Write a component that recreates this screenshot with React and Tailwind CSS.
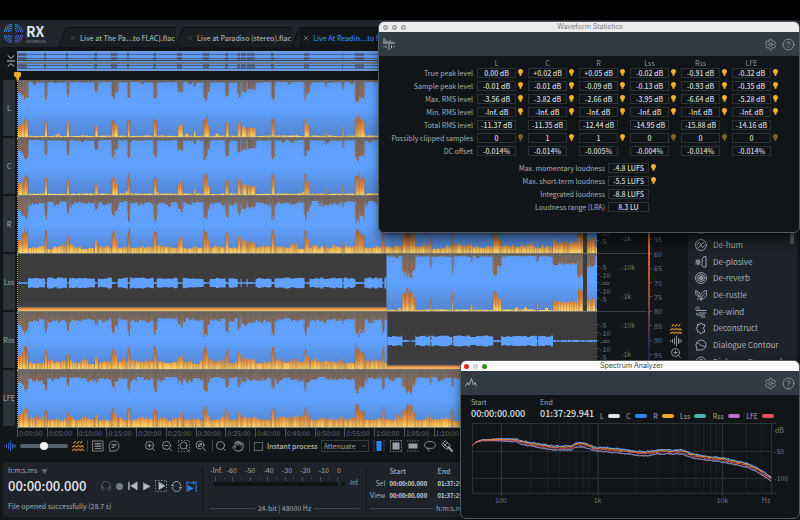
// src/App.jsx
import React, { useState } from 'react';
import { ZoomIn, ZoomOut, Search, Hand, Settings, CircleHelp, Headphones, ChevronDown, X } from 'lucide-react';

// ---------------------------------------------------------------- data

const LANE_W = 580;
const LANE_H = 58;

// Quiet passages of the recording: [start, width, depth]
const SPIKES = [
    [0, 3, 13], [3, 4, 17], [6, 4, 21], [27, 2, 20], [49, 2, 17], [77, 3, 12], [94, 3, 19], [97, 3, 13],
    [110, 2, 22], [136, 3, 21], [160, 3, 12], [163, 2, 15], [176, 2, 6], [186, 4, 22], [190, 2, 12],
    [208, 3, 18], [220, 3, 17], [224, 5, 12], [230, 8, 10], [254, 3, 21], [287, 2, 21], [289, 3, 14],
    [308, 1, 7], [325, 1, 11], [338, 4, 23], [342, 5, 19], [365, 2, 21], [385, 4, 20], [389, 6, 24],
    [395, 3, 17], [413, 1, 15], [435, 1, 20], [454, 1, 7], [476, 4, 23], [480, 4, 14], [520, 1, 9],
    [536, 4, 12], [540, 20, 10], [560, 6, 24], [570, 8, 13],
];

const LANES = [
    { name: 'L', floor: 1, noise: 1, gain: 1 },
    { name: 'C', floor: 1, noise: 1, gain: 1 },
    { name: 'R', floor: 4, noise: 6, gain: 1.2 },
    { name: 'Lss', floor: 1, noise: 1, gain: 1, quiet: [0, 369] },
    { name: 'Rss', floor: 5, noise: 6, gain: 1.1, quiet: [370, 580] },
    { name: 'LFE', floor: 6, noise: 6, gain: 1 },
];

const CHANNELS = ['L', 'C', 'R', 'Lss', 'Rss', 'LFE'];

const STATS = [
    { label: 'True peak level', values: ['0.00 dB', '+0.02 dB', '+0.05 dB', '-0.02 dB', '-0.91 dB', '-0.32 dB'], pins: [1, 1, 1, 1, 1, 1] },
    { label: 'Sample peak level', values: ['-0.01 dB', '-0.01 dB', '-0.09 dB', '-0.13 dB', '-0.93 dB', '-0.35 dB'], pins: [1, 1, 1, 1, 1, 1] },
    { label: 'Max. RMS level', values: ['-3.56 dB', '-3.82 dB', '-2.66 dB', '-3.95 dB', '-6.64 dB', '-5.28 dB'], pins: [1, 1, 1, 1, 1, 1] },
    { label: 'Min. RMS level', values: ['-Inf. dB', '-Inf. dB', '-Inf. dB', '-Inf. dB', '-Inf. dB', '-Inf. dB'], pins: [1, 1, 1, 1, 1, 1] },
    { label: 'Total RMS level', values: ['-11.37 dB', '-11.35 dB', '-12.44 dB', '-14.95 dB', '-15.88 dB', '-14.16 dB'], pins: null },
    { label: 'Possibly clipped samples', values: ['0', '1', '1', '0', '0', '0'], pins: [0, 1, 1, 0, 0, 0] },
    { label: 'DC offset', values: ['-0.014%', '-0.014%', '-0.005%', '-0.004%', '-0.014%', '-0.014%'], pins: null },
];

const LOUDNESS = [
    { label: 'Max. momentary loudness', value: '-4.8 LUFS', pin: true },
    { label: 'Max. short-term loudness', value: '-5.5 LUFS', pin: true },
    { label: 'Integrated loudness', value: '-8.8 LUFS', pin: false },
    { label: 'Loudness range (LRA)', value: '8.3 LU', pin: false },
];

const LEGEND = [
    { name: 'L', color: 'bg-[#e4e4e4]' },
    { name: 'C', color: 'bg-[#2f83f7]' },
    { name: 'R', color: 'bg-[#f5a623]' },
    { name: 'Lss', color: 'bg-[#3fb8a5]' },
    { name: 'Rss', color: 'bg-[#b573c6]' },
    { name: 'LFE', color: 'bg-[#ee5060]' },
];

const TIMES = Array.from({ length: 15 }, (_, i) => {
    const min = i * 5;
    return `${Math.floor(min / 60)}:${String(min % 60).padStart(2, '0')}:00`;
});

const rand = (n) => {
    const v = Math.sin(n * 12.9898) * 43758.5453;
    return v - Math.floor(v);
};

// ---------------------------------------------------------------- spectrogram

const depthAt = (x) => {
    let depth = 0;
    SPIKES.forEach(([start, width, d]) => {
        if (x >= start && x < start + width) depth = Math.max(depth, d);
    });
    return depth;
};

// How far the waveform stays away from the lane's edge in column x
const insetAt = (x, lane, seed) => {
    const swell = rand(Math.floor(x / 7) + seed);
    const floor = lane.floor + lane.noise * (0.3 * swell + 0.7 * rand(x * 3 + seed) * swell);
    const bump = rand(Math.floor(x / 3) * 5 + seed) > 0.95 ? 2 : 0;
    const spike = depthAt(x) * lane.gain * (0.75 + 0.25 * rand(x * 7 + seed));
    return Math.min(28, Math.max(floor + bump, spike));
};

const Spectrogram = ({ lane, index }) => {
    const loudFrom = lane.quiet && lane.quiet[0] === 0 ? lane.quiet[1] : 0;
    const loudTo = lane.quiet && lane.quiet[0] > 0 ? lane.quiet[0] : LANE_W;
    let wave = '';
    let edges = '';
    let streaks = '';
    for (let x = loudFrom; x < loudTo; x++) {
        if (x >= 566 && x < 570) continue;
        const top = insetAt(x, lane, index * 100 + 11);
        const bottom = insetAt(x, lane, index * 100 + 57);
        wave += `M${x} ${(top + 1).toFixed(1)}h1V${(57 - bottom).toFixed(1)}h-1z`;
        const near = depthAt(x - 1) || depthAt(x + 1);
        if (!depthAt(x) && near) edges += `M${x} 0h1V${(near * 0.8).toFixed(1)}h-1zM${x} 57h1V${(57 - near * 0.8).toFixed(1)}h-1z`;
        if (rand(x + index * 31) > 0.55) streaks += `M${x} 0h1V57h-1z`;
    }
    let band = '';
    if (lane.quiet) {
        for (let x = lane.quiet[0]; x < lane.quiet[1]; x++) {
            const gap = depthAt(x) > 8 || x > 536;
            const h = gap ? 0.5 + rand(x) * 0.6 : 4 + rand(Math.floor(x / 3)) * 1.5;
            band += `M${x} ${(29 - h).toFixed(1)}h1V${(29 + h).toFixed(1)}h-1z`;
        }
    }
    return (
        <svg viewBox={`0 0 ${LANE_W} ${LANE_H}`} preserveAspectRatio="none" className="block h-full w-full" aria-hidden="true">
            <defs>
                <linearGradient id={`spec${index}`} x1="0" y1="0" x2="0" y2="1">
                    <stop offset="0" stopColor="#696868" />
                    <stop offset="0.12" stopColor="#7c6c64" />
                    <stop offset="0.35" stopColor="#986b50" />
                    <stop offset="0.5" stopColor="#766c68" />
                    <stop offset="0.68" stopColor="#bb7443" />
                    <stop offset="0.85" stopColor="#e79345" />
                    <stop offset="0.94" stopColor="#fbc85b" />
                    <stop offset="1" stopColor="#fde07a" />
                </linearGradient>
                <linearGradient id={`wave${index}`} gradientUnits="userSpaceOnUse" x1="0" y1="0" x2="0" y2="58">
                    <stop offset="0" stopColor="#5b98f0" />
                    <stop offset="0.2" stopColor="#60a1ff" />
                    <stop offset="0.5" stopColor="#60a1ff" />
                    <stop offset="0.78" stopColor="#5890e2" />
                    <stop offset="1" stopColor="#5485d0" />
                </linearGradient>
                <linearGradient id={`floor${index}`} x1="0" y1="0" x2="0" y2="1">
                    <stop offset="0" stopColor="#3c3c3c" />
                    <stop offset="0.5" stopColor="#3f4656" />
                    <stop offset="0.6" stopColor="#a0683f" />
                    <stop offset="0.8" stopColor="#f0a050" />
                    <stop offset="1" stopColor="#f8bc62" />
                </linearGradient>
            </defs>
            <rect width={LANE_W} height={LANE_H} fill={`url(#spec${index})`} />
            <path d={streaks} fill="#7b4f3c" opacity="0.28" />
            <path d={wave} fill={`url(#wave${index})`} />
            <path d={edges} fill="#7a6b68" opacity="0.45" />
            {!lane.quiet && <rect x="566" width="4" height={LANE_H} fill="#3c3c3c" />}
            {lane.quiet && (
                <>
                    {loudFrom > 0 && <rect x="566" width="4" height={LANE_H} fill="#3c3c3c" />}
                    <rect x={lane.quiet[0]} width={lane.quiet[1] - lane.quiet[0]} height={LANE_H} fill="#3c3c3c" />
                    <rect x={lane.quiet[0]} y="48" width={lane.quiet[1] - lane.quiet[0]} height="9" fill={`url(#floor${index})`} />
                    <path d={band} fill="#60a1ff" />
                </>
            )}
            <rect y="57" width={LANE_W} height="1" fill="#777774" />
        </svg>
    );
};

const Overview = () => {
    const rows = [[3, 1, '#53698c'], [7, 1, '#4e5f7c'], [9, 1, '#3d4148'], [11, 2, '#70747c'], [14, 1, '#4b5870'], [17, 1, '#53698c']];
    return (
        <svg viewBox="0 0 580 20" preserveAspectRatio="none" className="block h-full w-full" aria-hidden="true">
            <rect width="580" height="20" fill="#5c9af4" />
            {rows.map(([y, h, fill]) => <rect key={y} y={y} width="580" height={h} fill={fill} />)}
            {SPIKES.filter((s) => s[2] > 9).map(([x, w]) => (
                <path key={x} d={`M${x} 2h${w}v3h-${w}zM${x} 6h${w}v3h-${w}zM${x} 13h${w}v5h-${w}z`} fill="#4a536a" opacity="0.75" />
            ))}
            <path d="M0 0h580v1H0zM0 19h580v1H0zM0 0h1v20H0z" fill="#8d9aa6" opacity="0.6" />
        </svg>
    );
};

// ---------------------------------------------------------------- icons

const Icon = ({ children, size = 'size-3', box = 24, width = 1.6 }) => (
    <svg viewBox={`0 0 ${box} ${box}`} className={`${size} block shrink-0`} fill="none" stroke="currentColor" strokeWidth={width} strokeLinecap="round" strokeLinejoin="round" aria-hidden="true">
        {children}
    </svg>
);

const WaveIcon = () => <Icon width={1.8}><path d="M1 11v2M5 9v6M9 6v12M13 2v20M17 7v10M20 9v6M23 11v2" /></Icon>;

const SpectrumIcon = () => (
    <Icon width={2.2}>
        <path d="M1 21l4-3 4 3 4-3 4 3 3-3 3 3M1 14l4-3 4 3 4-3 4 3 3-3 3 3M4 6l3-3M10 7l4-4M17 6l3-3" />
    </Icon>
);

const Logo = () => (
    <svg viewBox="0 0 40 40" className="size-[19px] shrink-0" fill="none" strokeWidth="2" aria-hidden="true">
        <defs>
            <linearGradient id="logo" gradientUnits="userSpaceOnUse" x1="0" y1="0" x2="40" y2="40">
                <stop offset="0" stopColor="#49b4ef" />
                <stop offset="0.5" stopColor="#3276d8" />
                <stop offset="1" stopColor="#6a55c8" />
            </linearGradient>
        </defs>
        <g stroke="url(#logo)">
            <path d="M13 17a4 4 0 0 1 4-4M9 17a8 8 0 0 1 8-8M5 17a12 12 0 0 1 12-12M1 17a16 16 0 0 1 16-16" />
            <path d="M27 17a4 4 0 0 0-4-4M31 17a8 8 0 0 0-8-8M35 17a12 12 0 0 0-12-12M39 17a16 16 0 0 0-16-16" />
            <path d="M13 23a4 4 0 0 0 4 4M9 23a8 8 0 0 0 8 8M5 23a12 12 0 0 0 12 12M1 23a16 16 0 0 0 16 16" />
            <path d="M27 23a4 4 0 0 1-4 4M31 23a8 8 0 0 1-8 8M35 23a12 12 0 0 1-12 12M39 23a16 16 0 0 1-16 16" />
        </g>
    </svg>
);

const Pin = ({ on }) => (
    <svg viewBox="0 0 10 14" className={`h-[7px] w-[5px] shrink-0 ${on ? 'text-[#f5b02e]' : 'text-[#7d622c]'}`} aria-hidden="true">
        <path d="M5 0a5 5 0 0 1 5 5c0 2-1.500 3.500-3 5v3.500H3V10C1.500 8.500 0 7 0 5a5 5 0 0 1 5-5z" fill="currentColor" />
    </svg>
);

const MODULES = [
    { name: 'De-ess', icon: <circle cx="12" cy="12" r="11" /> },
    { name: 'De-hum', icon: <><circle cx="12" cy="12" r="11" /><path d="M5 12c0-6 7-6 7 0s7 6 7 0M5 19L19 5" /></> },
    { name: 'De-plosive', icon: <><path d="M22 2v20h-6l-3-4 2-3-2-2 3-3-2-3 3-5zM6 7v3M6 15v3M1 12h2M9 12h2M2 8l2 2M2 17l2-2M9 8L8 10M9 17l-1-2" /><circle cx="6" cy="12.500" r="2.500" /></> },
    { name: 'De-reverb', icon: <><circle cx="12" cy="12" r="11" /><circle cx="12" cy="12" r="7" /><circle cx="12" cy="12" r="3.500" /><circle cx="12" cy="12" r="1" /></> },
    { name: 'De-rustle', icon: <path d="M12 22c-5-9 1-17 11-19 1 10-2 18-11 17M12 22c1-6 4-10 7-13M8 15C2 14 0 9 1 3c4 1 8 3 9 7M8 15C7 11 5 8 3 6M5 20h3" /> },
    { name: 'De-wind', icon: <path d="M3 9h19M8 14h14M8 18h11M12 22h8M3 9C0 6 2 2 5 2s5 4 2 5M4 14c-2 0-2 3 0 4h4" /> },
    { name: 'Deconstruct', icon: <path d="M9 5a3 3 0 1 1 6 0h4v5a2.500 2.500 0 1 0 0 5v5h-4a3 3 0 1 1-6 0H5v-5a2.500 2.500 0 1 1 0-5V5z" /> },
    { name: 'Dialogue Contour', icon: <path d="M3 22h9a10 10 0 1 0-10-10c0 3 1 5 2 7zM4 8c5-1 5 4 9 5s5 2 7 3" /> },
    { name: 'Dialogue De-reverb', icon: <><circle cx="12" cy="12" r="10" /><circle cx="12" cy="12" r="5" /></> },
];

const IconButton = ({ label, className = '', children }) => (
    <button type="button" aria-label={label} className={`flex shrink-0 items-center justify-center ${className}`}>{children}</button>
);

// ---------------------------------------------------------------- app frame

const Header = () => (
    <header className="flex h-[27px] items-end bg-[#20262b] pl-1">
        <div className="flex w-[55px] shrink-0 items-center gap-[3px] pb-1">
            <Logo />
            <div className="flex flex-col">
                <span className="text-[14px] leading-[15px] font-bold text-[#dfe3e6]">RX</span>
                <span className="text-[4px] leading-[4px] text-[#8b949c]">ADVANCED</span>
            </div>
        </div>
        <nav className="flex h-5 flex-1 overflow-hidden whitespace-nowrap text-[#a3adb5]">
            <Slant />
            <Tab name="Live at The Pa…to FLAC].flac" />
            <Slant />
            <Tab name="Live at Paradiso (stereo).flac" />
            <Slant />
            <Tab name="Live At Readin…to FLAC].flac" active />
        </nav>
    </header>
);

const Slant = () => (
    <svg viewBox="0 0 8 20" className="h-5 w-2 shrink-0" aria-hidden="true">
        <path d="M0 20L7 0h1v20z" fill="#191e22" />
        <path d="M0 20L7 0" stroke="#0e1113" />
    </svg>
);

const Tab = ({ name, active }) => (
    <div className={`flex items-center gap-[3px] border-t border-[#0e1113] pr-px pl-[2px] ${active ? 'bg-[#13171a] text-[#2f83ee]' : 'bg-[#191e22] text-[#a3adb5]'}`}>
        <IconButton label={`Close ${name}`} className={active ? 'text-[#88929a]' : 'text-[#454e56]'}><X className="size-2" strokeWidth={2} /></IconButton>
        <a href="#file" className="text-[7px] leading-[10px] font-medium">{name}</a>
    </div>
);

const Editor = () => (
    <div className="flex min-w-0 flex-1 flex-col">
        <div className="mt-1 flex h-5">
            <div className="flex w-[17px] shrink-0 items-center justify-center pl-1 text-[#c3cad0]">
                <IconButton label="Collapse overview"><Icon size="h-[14px] w-2" width={3}><path d="M3 -4l9 8 9-8M0 12h24M3 28l9-8 9 8" /></Icon></IconButton>
            </div>
            <div className="flex-1"><Overview /></div>
        </div>
        <div className="flex h-[9px] items-end pl-[14px]">
            <svg viewBox="0 0 14 16" className="h-2 w-[7px]" aria-hidden="true"><path d="M2 0h10l2 2v6l-4 4v4H5v-4L0 8V2z" fill="#f5a92c" /></svg>
        </div>
        {LANES.map((lane, i) => (
            <div key={lane.name} className="flex h-[58px] pl-[3px]">
                <div className="mr-[2px] mb-[2px] flex w-3 shrink-0 items-center justify-center rounded-[1px] bg-[#2a323a] text-[7px] font-medium text-[#8c969e]">{lane.name}</div>
                <div className="min-w-0 flex-1 border-l border-dotted border-[#a89a60]"><Spectrogram lane={lane} index={i} /></div>
            </div>
        ))}
        <div className="flex h-[9px] overflow-hidden pl-[17px] text-[7px] leading-[11px] text-[#606a73]">
            {TIMES.map((t) => <div key={t} className="w-[5.13%] shrink-0 border-l border-[#49525a] pl-px">{t}</div>)}
        </div>
    </div>
);

// One scale per lane, from R down to Rss
const LevelScale = () => (
    <div className="flex w-[50px] shrink-0 flex-col pt-[149px] text-[7px] text-[#6a757f]">
        {LANES.slice(2, 5).map((lane) => (
            <div key={lane.name} className="flex h-[58px] border-b border-[#3c444b]">
                <div className="flex w-6 flex-col justify-center leading-[8px]">
                    {['-5', '-10', '-∞', '-10', '-5'].map((v, i) => (
                        <span key={i} className="flex h-2 items-center gap-px"><i className="h-px w-[2px] bg-[#4a535b]" />{v}</span>
                    ))}
                </div>
                <div className="flex flex-col justify-between pt-2 pb-[10px] leading-[10px]">
                    <span>-10k</span>
                    <span>-1k</span>
                </div>
            </div>
        ))}
    </div>
);

const ColorScale = () => (
    <div className="flex w-[22px] shrink-0 pt-[33px] pb-[9px]">
        <div className="ml-px w-[2px] bg-linear-to-b from-[#ffd860] via-[#e2601a] via-50% to-[#20264a] to-78%" />
        <div className="flex flex-1 flex-col pt-[152px] text-[7px] text-[#6a757f]">
            <div className="grid h-[130px] grid-rows-9">
                {[55, 60, 65, 70, 75, 80, 85, 90, 95].map((v) => (
                    <span key={v} className="flex items-center gap-[2px] leading-[8px]"><i className="h-px w-[2px] bg-[#4a535b]" />{v}</span>
                ))}
            </div>
        </div>
    </div>
);

const Modules = () => (
    <aside className="mr-[3px] w-[109px] shrink-0 bg-[#1d2328]">
        <div className="flex pt-[173px]">
            <ul className="grid h-[150px] flex-1 grid-rows-9 text-[#a9b2b9]">
                {MODULES.map((m) => (
                    <li key={m.name} className="flex items-center gap-[6px] pl-[7px] text-[8px] leading-[10px] whitespace-nowrap">
                        <Icon width={1.8}>{m.icon}</Icon>
                        {m.name}
                    </li>
                ))}
            </ul>
            <div className="mr-[3px] h-[24px] w-1 rounded-full bg-[#56616b]" />
        </div>
    </aside>
);

const Divider = () => <span className="h-3 w-px shrink-0 bg-[#3a434a]" />;

const Toolbar = () => {
    const [mix, setMix] = useState(50);
    const [instant, setInstant] = useState(false);
    return (
        <div className="flex h-[18px] items-center overflow-hidden pl-1 whitespace-nowrap text-[#98a1a8]">
            <span className="text-[#2f6fc4]"><WaveIcon /></span>
            <input
                type="range"
                aria-label="Waveform and spectrogram mix"
                value={mix}
                onChange={(e) => setMix(e.target.value)}
                className="mx-[4px] h-1 w-12 shrink-0 appearance-none rounded-full bg-[#58636d] [&::-webkit-slider-thumb]:size-2 [&::-webkit-slider-thumb]:appearance-none [&::-webkit-slider-thumb]:rounded-full [&::-webkit-slider-thumb]:bg-[#f2f4f5]"
            />
            <span className="text-[#c58425]"><SpectrumIcon /></span>
            <div className="ml-[3px] flex items-center gap-[4px]">
                <Divider />
                <IconButton label="Event list"><Icon><path d="M2 2h20v20H2zM6 7h12M6 10h12M6 13h12M6 17h12" /></Icon></IconButton>
                <IconButton label="Comments"><Icon><path d="M3 22h9a10 10 0 1 0-10-10c0 3 1 5 2 7zM8 9h8M8 12h8M8 15h4" /></Icon></IconButton>
            </div>
            <div className="ml-6 flex items-center gap-[5px]">
                <IconButton label="Zoom in"><ZoomIn className="size-3" strokeWidth={1.8} /></IconButton>
                <IconButton label="Zoom out"><ZoomOut className="size-3" strokeWidth={1.8} /></IconButton>
                <IconButton label="Zoom to selection"><Icon><circle cx="11" cy="11" r="7" /><path d="M16 16l6 6" /><path d="M1 1h22v22H1z" strokeDasharray="1 5" /></Icon></IconButton>
                <IconButton label="Zoom to fit"><Icon><circle cx="10" cy="10" r="8" /><path d="M16 16l6 6M7 13l6-6M13 11V7H9M7 9v4h4" /></Icon></IconButton>
                <Divider />
            </div>
            <div className="ml-px flex items-center gap-[5px] pl-px">
                <IconButton label="Zoom tool"><Search className="size-3" strokeWidth={1.8} /></IconButton>
                <IconButton label="Grab tool"><Hand className="size-3" strokeWidth={1.8} /></IconButton>
                <Divider />
            </div>
            <label className="ml-1 flex items-center gap-1 text-[7px] font-medium text-[#b4bcc3]">
                <input type="checkbox" checked={instant} onChange={() => setInstant(!instant)} className="size-[9px] appearance-none border border-[#58626b] checked:bg-[#2f83ee]" />
                Instant process
            </label>
            <div className="relative ml-[3px] shrink-0">
                <select aria-label="Instant process mode" className="block h-3 w-12 appearance-none border border-[#333b42] bg-transparent pl-[2px] text-[7px] leading-[10px] text-[#98a1a8]">
                    <option>Attenuate</option>
                    <option>De-click</option>
                </select>
                <ChevronDown className="pointer-events-none absolute top-[3px] right-[2px] size-[6px]" />
            </div>
            <div className="ml-1 flex items-center gap-[5px]">
                <IconButton label="Time selection" className="text-[#2f83f7]"><Icon><path d="M7 2h10v20H7z" fill="currentColor" stroke="none" /><path d="M2 1v22M22 1v22" strokeDasharray="1 4" /></Icon></IconButton>
                <IconButton label="Time and frequency selection"><Icon><path d="M5 5h14v14H5z" fill="currentColor" stroke="none" /><path d="M1 1h22v22H1z" strokeDasharray="1 4" /></Icon></IconButton>
                <IconButton label="Frequency selection"><Icon><path d="M3 7h18v10H3z" fill="currentColor" stroke="none" /><path d="M1 2h22M1 22h22" strokeDasharray="1 4" /></Icon></IconButton>
                <IconButton label="Lasso"><Icon><path d="M8 17c-4-1-7-3-7-7 0-5 5-7 11-7s11 2 11 7-5 7-11 7c-2 0-4-2-5-1s0 3 2 3 1 3 0 4" /></Icon></IconButton>
                <IconButton label="Brush"><Icon width={2}><path d="M9 2l10 9-8 8L2 10zM5 7l9 9M13 5l-8 8" /><path d="M15 14l7 8" strokeWidth="4" /></Icon></IconButton>
                <IconButton label="Magic wand"><Icon><path d="M9 3l3 3 4-2v5l4 3-5 1-1 5-4-4-5 1 3-5-2-4 5 1z" /></Icon></IconButton>
            </div>
        </div>
    );
};

const Transport = () => (
    <footer className="mx-[3px] mt-[7px] mb-[3px] flex h-[55px] items-stretch overflow-hidden rounded-[3px] bg-[#1d2328] py-1 text-[7px] leading-[9px] whitespace-nowrap text-[#a3acb4]">
        <section className="flex w-[200px] shrink-0 flex-col border-r border-[#12161a] pl-[5px]">
            <p className="flex items-center gap-1">h:m:s.ms <span className="text-[6px] text-[#606a73]">▼</span></p>
            <div className="mt-px flex h-5 items-center gap-[4px]">
                <output className="w-[88px] text-[13px] leading-[20px] font-medium text-[#e6e9eb]">00:00:00.000</output>
                <IconButton label="Monitor" className="text-[#59636b]"><Headphones className="size-3" strokeWidth={1.8} /></IconButton>
                <IconButton label="Record" className="size-[7px] rounded-full bg-[#747d84]"></IconButton>
                <IconButton label="Rewind" className="ml-px text-[#b4bcc2]"><Icon size="size-[10px]"><path d="M22 3v18L7 12zM2 3h1v18H2z" fill="currentColor" /></Icon></IconButton>
                <IconButton label="Play" className="text-[#b4bcc2]"><Icon size="size-[9px]"><path d="M4 3v18l17-9z" fill="currentColor" /></Icon></IconButton>
                <IconButton label="Play selection" className="text-[#b4bcc2]"><Icon size="size-[12px]"><path d="M8 5v14l11-7z" fill="currentColor" /><path d="M1 1h22v22H1z" strokeDasharray="1 5" /></Icon></IconButton>
                <IconButton label="Loop"><Icon size="size-[11px]" width={2}><path d="M3 10a9 9 0 0 1 18 0M21 14a9 9 0 0 1-18 0M0 11l3-3 3 3M18 13l3 3 3-3" /></Icon></IconButton>
                <IconButton label="Follow playhead" className="text-[#2f83f7]"><Icon size="size-[11px]" width={2}><path d="M2 1v22M22 1v22M2 4h14" /><path d="M4 9v14l13-7zM15 0l6 4-6 4z" fill="currentColor" stroke="none" /></Icon></IconButton>
            </div>
            <p className="mt-[6px]">File opened successfully (28.7 s)</p>
        </section>
        <section className="flex w-[164px] shrink-0 flex-col justify-between border-r border-[#12161a] px-[7px]">
            <div>
                <div className="flex gap-1">
                    <span>-Inf.</span>
                    <div className="flex flex-1 justify-between pr-[18px]">
                        {['-60', '-50', '-40', '-30', '-20', '-10', '0'].map((v) => <span key={v}>{v}</span>)}
                    </div>
                </div>
                <div className="flex items-end">
                    <div className="mt-[2px] ml-1 w-[126px]">
                        <div className="flex h-1 justify-between pl-px">
                            {Array.from({ length: 15 }, (_, i) => <i key={i} className={`w-px ${i % 2 ? 'h-[2px] bg-[#363e45]' : 'h-1 bg-[#4b545c]'}`} />)}
                        </div>
                        <div className="mt-px h-1 bg-[#101316]" />
                    </div>
                    <div className="mx-[3px] size-1 bg-[#101316]" />
                    <span className="text-[6px] leading-[6px]">-Inf.</span>
                </div>
            </div>
            <div className="flex items-center gap-[3px]">
                <i className="h-px flex-1 bg-[#3f484f]" />24-bit | 48000 Hz<i className="h-px flex-1 bg-[#3f484f]" />
            </div>
        </section>
        <section className="flex flex-col justify-between pl-[3px]">
            <table className="text-[7px] leading-[9px]">
                <thead>
                    <tr className="h-[11px] text-left"><th></th><th className="w-12 font-medium">Start</th><th className="font-medium">End</th></tr>
                </thead>
                <tbody className="text-[#cfd4d8]">
                    <tr className="h-[12px]"><th className="w-[19px] pr-1 text-right font-normal text-[#a3acb4]">Sel</th><td className="text-[6px] font-bold">00:00:00.000</td><td className="text-[6px] font-bold">01:37:29.941</td></tr>
                    <tr className="h-[12px]"><th className="pr-1 text-right font-normal text-[#a3acb4]">View</th><td className="text-[6px] font-bold">00:00:00.000</td><td className="text-[6px] font-bold">01:37:29.941</td></tr>
                </tbody>
            </table>
            <div className="flex items-center gap-[3px]"><i className="h-px w-[63px] bg-[#3f484f]" />h:m:s.ms</div>
        </section>
    </footer>
);

// ---------------------------------------------------------------- floating windows

const WindowTools = ({ children }) => (
    <div className="flex h-6 items-center gap-[5px] bg-[#323b44] px-1 text-[#8f99a2]">
        <div className="mr-auto text-[#a3adb6]">{children}</div>
        <IconButton label="Settings"><Settings className="size-[13px]" strokeWidth={1.8} /></IconButton>
        <IconButton label="Help"><CircleHelp className="size-[13px]" strokeWidth={1.8} /></IconButton>
    </div>
);

const Value = ({ children, wide }) => (
    <span className={`block h-[10px] border border-[#2b3237] text-center leading-[8px] font-medium text-[#d5d9dc] ${wide ? 'w-[41px]' : 'w-[39px]'}`}>{children}</span>
);

const WaveformStatistics = () => (
    <section className="absolute top-[21px] right-0 w-[422px] overflow-hidden rounded-md border border-[#51585e] bg-[#111518] shadow-lg shadow-black/60">
        <div className="flex h-[10px] items-center gap-1 bg-[#ececec] px-1">
            <i className="size-[5px] rounded-full border border-[#8d8d8d] bg-[#c9c9c9]" />
            <i className="size-[5px] rounded-full border border-[#8d8d8d] bg-[#c9c9c9]" />
            <i className="size-[5px] rounded-full border border-[#8d8d8d] bg-[#c9c9c9]" />
            <h2 className="flex-1 pr-[25px] text-center font-[Inter,sans-serif] text-[7px] leading-[10px] text-[#7c7c7c]">Waveform Statistics</h2>
        </div>
        <WindowTools>
            <Icon width={2}><path d="M2 1v9M6 4v6M10 7v3M14 5v5M18 8v2M1 10h22M2 17v1M6 16v3M12 13v10M17 15v5M22 17v1" /></Icon>
        </WindowTools>
        <table className="mt-1 text-[7px]">
            <thead>
                <tr className="h-[6px] leading-[6px] text-[#8f999f]">
                    <th></th>
                    {CHANNELS.map((c) => <th key={c} scope="col" className="pr-3 font-normal">{c}</th>)}
                </tr>
            </thead>
            <tbody>
                {STATS.map((row) => (
                    <tr key={row.label} className="h-[13px]">
                        <th scope="row" className="w-[98px] pr-1 text-right leading-[10px] font-normal whitespace-nowrap text-[#a9b1b7]">{row.label}</th>
                        {row.values.map((v, i) => (
                            <td key={i} className="w-[51px] p-0">
                                <div className="flex items-center gap-[2px]">
                                    <Value>{v}</Value>
                                    {row.pins && <Pin on={row.pins[i]} />}
                                </div>
                            </td>
                        ))}
                    </tr>
                ))}
            </tbody>
        </table>
        <table className="mt-1 mb-[19px] text-[7px]">
            <tbody>
                {LOUDNESS.map((row) => (
                    <tr key={row.label} className="h-[13px]">
                        <th scope="row" className="w-[229px] pr-[3px] text-right leading-[10px] font-normal text-[#a9b1b7]">{row.label}</th>
                        <td className="p-0">
                            <div className="flex items-center gap-[2px]">
                                <Value wide>{row.value}</Value>
                                {row.pin && <Pin on />}
                            </div>
                        </td>
                    </tr>
                ))}
            </tbody>
        </table>
    </section>
);

// Averaged spectrum, chart coordinates
const CURVE = [
    [0, 23], [4, 19], [10, 17], [28, 16], [44, 16], [50, 18], [68, 21], [80, 23], [100, 23], [103, 20], [113, 20],
    [123, 24], [138, 25], [148, 26], [164, 28], [173, 29], [188, 27], [211, 27], [221, 31], [233, 33], [251, 35],
    [265, 38], [278, 41], [288, 46], [295, 51], [300, 54],
];

const TRACES = [
    { color: '#3fb8a5', drop: 4, seed: 5 },
    { color: '#b573c6', drop: 4, seed: 40 },
    { color: '#e4e4e4', drop: 0, seed: 90 },
    { color: '#2f83f7', drop: 0, seed: 130 },
    { color: '#f5a623', drop: 1, seed: 170 },
    { color: '#ee5060', drop: 2, seed: 230 },
];

const tracePoints = ({ drop, seed }) => {
    const points = [];
    for (let x = 0; x <= 300; x += 2) {
        const i = Math.max(1, CURVE.findIndex((p) => p[0] >= x));
        const [x0, y0] = CURVE[i - 1];
        const [x1, y1] = CURVE[i];
        const y = y0 + ((y1 - y0) * (x - x0)) / (x1 - x0);
        const lean = x < 60 ? x / 60 : 1;
        points.push(`${x},${(y + drop * lean + (rand(x + seed) - 0.5) * 1.4 * lean).toFixed(1)}`);
    }
    return points.join(' ');
};

const SpectrumChart = () => (
    <svg viewBox="0 0 322 86" className="mt-[2px] block w-full" aria-label="Spectrum">
        <g stroke="#1b2024">
            {[58, 75, 87, 97, 104, 111, 117, 164, 186, 202, 214, 224, 232, 239, 245, 275, 290].map((x) => <path key={x} d={`M${x}.5 0v70`} />)}
        </g>
        <path d="M0.500 0.500h305M0.500 28.500h302M0.500 55.500h302M0.500 70.500h305M300.500 0v71M0.500 0v70" stroke="#2d3338" fill="none" />
        <path d="M29.500 0v73M126.500 0v73M251.500 0v73" stroke="#363d43" />
        {TRACES.map((t) => <polyline key={t.color} points={tracePoints(t)} fill="none" stroke={t.color} opacity="0.9" />)}
        <g fill="#6f7981" fontSize="7">
            <text x="304" y="10">dB</text>
            <text x="303" y="31">-50</text>
            <text x="303" y="58">-100</text>
            <text x="29" y="80" textAnchor="middle">100</text>
            <text x="126" y="80" textAnchor="middle">1k</text>
            <text x="251" y="80" textAnchor="middle">10k</text>
            <text x="295" y="80" textAnchor="middle">Hz</text>
        </g>
    </svg>
);

const SpectrumAnalyzer = () => (
    <section className="absolute top-[360px] right-0 w-[340px] overflow-hidden rounded-md border border-[#51585e] bg-[#111518] shadow-lg shadow-black/60">
        <div className="flex h-[10px] items-center gap-1 bg-[#fbfbfb] px-[3px]">
            <i className="size-[5px] rounded-full bg-[#e0281f]" />
            <i className="size-[5px] rounded-full border border-[#c4c4c4] bg-[#dcdcdc]" />
            <i className="size-[5px] rounded-full bg-[#3a8a2a]" />
            <h2 className="flex-1 pr-[24px] text-center font-[Inter,sans-serif] text-[7px] leading-[10px] text-[#3f3f3f]">Spectrum Analyzer</h2>
        </div>
        <WindowTools>
            <Icon width={2}><path d="M1 18l4-7 3 5 5-13 4 13 3-5 3 7" /></Icon>
        </WindowTools>
        <div className="flex items-end pt-[2px] pl-[10px] text-[#a3acb4]">
            <dl className="flex">
                <div className="w-[69px]">
                    <dt className="text-[7px] leading-[10px]">Start</dt>
                    <dd className="text-[9px] leading-[14px] font-medium text-[#dfe2e4]">00:00:00.000</dd>
                </div>
                <div className="w-[60px]">
                    <dt className="text-[7px] leading-[10px]">End</dt>
                    <dd className="text-[9px] leading-[14px] font-medium text-[#dfe2e4]">01:37:29.941</dd>
                </div>
            </dl>
            <ul className="mr-[25px] flex flex-1 justify-between text-[7px] leading-[10px]">
                {LEGEND.map((l) => (
                    <li key={l.name} className="flex items-center gap-1">{l.name}<i className={`h-1 w-3 rounded-full ${l.color}`} /></li>
                ))}
            </ul>
        </div>
        <div className="mt-px mb-[9px] pr-[6px] pl-[11px]"><SpectrumChart /></div>
    </section>
);

export default function App() {
    return (
        <div className="relative flex min-h-screen flex-col overflow-hidden bg-[#121619] pt-5 font-['Noto_Sans_CJK_SC',sans-serif] before:absolute before:inset-x-0 before:top-0 before:h-5 before:bg-black">
            <Header />
            <main className="flex">
                <Editor />
                <LevelScale />
                <ColorScale />
                <div className="flex w-[19px] shrink-0 flex-col items-center justify-end pr-[5px] pb-[78px] text-[#98a1a8]">
                    <IconButton label="Spectrogram view" className="text-[#c58425]"><SpectrumIcon /></IconButton>
                    <IconButton label="Waveform view"><WaveIcon /></IconButton>
                    <IconButton label="Zoom scale"><ZoomIn className="size-3" strokeWidth={1.8} /></IconButton>
                </div>
                <Modules />
            </main>
            <Toolbar />
            <Transport />
            <WaveformStatistics />
            <SpectrumAnalyzer />
        </div>
    );
}
